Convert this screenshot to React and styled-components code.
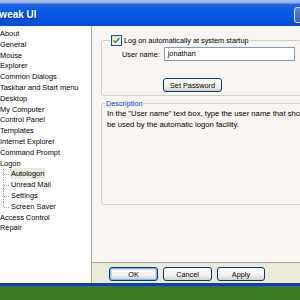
import styled, { createGlobalStyle } from "styled-components";

const Global = createGlobalStyle`
  html, body { margin: 0; padding: 0; }
  body { width: 300px; height: 300px; overflow: hidden; font-family: "Liberation Sans", Arial, sans-serif; }
`;

const Screen = styled.div`
  width: 300px;
  height: 300px;
  overflow: hidden;
  display: flex;
  flex-direction: column;
  background: linear-gradient(to bottom, #2f6f1e, #4d8f2a 6px, #3a7a22);
`;

const Window = styled.div`
  display: flex;
  flex-direction: column;
  width: 300px;
  border-bottom: 3px solid #0a3fb8;
`;

const TitleBar = styled.div`
  height: 26px;
  display: flex;
  align-items: center;
  justify-content: space-between;
  background: linear-gradient(to bottom, #a9c0ec 0, #8eaeea 3px, #2a66e4 4px, #0a5be8 9px, #0053e0 20px, #0a4acc 26px);
  color: #fff;
  font-weight: bold;
  font-size: 10px;
  padding-top: 3px;
  box-sizing: border-box;
`;

const Title = styled.span`
  margin-left: -6px;
  text-shadow: 1px 1px 0 #0a2f9a;
`;

const TitleButton = styled.div`
  width: 14px;
  height: 14px;
  margin-right: -10px;
  border: 1px solid #dfe8fb;
  border-radius: 3px;
  background: linear-gradient(#4f86f0, #2a62de);
`;

const Body = styled.div`
  height: 257px;
  display: flex;
  background: #ece9d8;
`;

const Tree = styled.ul`
  flex: 0 0 91px;
  margin: 0;
  padding: 3px 0 0 0;
  list-style: none;
  background: #fff;
  border-right: 1px solid #a7a6aa;
  font-size: 7.4px;
  color: #000;
  overflow: hidden;
`;

const Node = styled.li`
  position: relative;
  height: 10.8px;
  line-height: 10.8px;
  padding-left: ${(p) => (p.$child ? "11px" : "0")};
  margin-left: -1px;
  white-space: nowrap;
`;

const NodeLabel = styled.span`
  padding: 1px 1px;
  background: ${(p) => (p.$selected ? "#ece9d8" : "transparent")};
`;

const Branch = styled.span`
  position: absolute;
  left: 4px;
  top: 0;
  width: 6px;
  height: ${(p) => (p.$last ? "5px" : "10.8px")};
  border-left: 1px dotted #a0a0a0;
  &::after {
    content: "";
    position: absolute;
    left: 0;
    top: 5px;
    width: 5px;
    border-top: 1px dotted #a0a0a0;
  }
`;

const Main = styled.div`
  flex: 1;
  min-width: 0;
  display: flex;
  flex-direction: column;
  overflow: hidden;
`;

const Page = styled.div`
  height: 237px;
  box-sizing: border-box;
  background: #f8f5f2;
  border-bottom: 1px solid #a7a6aa;
  padding: 9px 0 0 9px;
  font-size: 7.3px;
  overflow: hidden;
`;

const Group = styled.fieldset`
  min-width: 0;
  margin: 0 -10px 0 0;
  padding: 0;
  border: 1px solid #d0d0bf;
  border-radius: 3px;
  height: ${(p) => p.$h}px;
  box-sizing: border-box;
  & + & {
    margin-top: 3px;
  }
`;

const Legend = styled.legend`
  display: flex;
  align-items: center;
  gap: 2px;
  padding: 0 1px;
  margin-left: ${(p) => p.$indent}px;
  color: ${(p) => p.$color || "#000"};
  font-size: 7.3px;
`;

const Check = styled.span`
  width: 9px;
  height: 9px;
  border: 1px solid #1c5180;
  background: linear-gradient(135deg, #dcdcd7, #fff);
  display: flex;
  align-items: center;
  justify-content: center;
`;

const Row = styled.div`
  display: flex;
  align-items: center;
  margin: 1px 0 0 20px;
  gap: 4px;
`;

const Label = styled.span`
  flex: 0 0 37px;
  white-space: nowrap;
`;

const Input = styled.div`
  flex: 0 0 131px;
  height: 14px;
  box-sizing: border-box;
  border: 1px solid #7f9db9;
  background: #fff;
  padding-left: 3px;
  line-height: 12px;
`;

const Button = styled.button`
  font-family: inherit;
  font-size: 7.3px;
  color: #000;
  height: 14px;
  width: ${(p) => p.$w}px;
  padding: 0;
  border: 1px solid #003c74;
  border-radius: 3px;
  background: linear-gradient(#fff, #f2f1ea 60%, #d6d0c5);
  box-shadow: ${(p) => (p.$default ? "inset 0 0 0 1px #8cb4f2, inset 0 0 0 2px #c6d8f8" : "none")};
`;

const PassRow = styled.div`
  margin: 17px 0 0 61px;
`;

const Description = styled.p`
  margin: 0 0 0 5px;
  font-size: 7.7px;
  line-height: 11px;
  white-space: nowrap;
`;

const Buttons = styled.div`
  display: flex;
  gap: 5px;
  padding: 4px 0 0 17px;
`;

const items = [
  "About", "General", "Mouse", "Explorer", "Common Dialogs", "Taskbar and Start menu",
  "Desktop", "My Computer", "Control Panel", "Templates", "Internet Explorer",
  "Command Prompt", "Logon",
];
const logonChildren = ["Autologon", "Unread Mail", "Settings", "Screen Saver"];
const tail = ["Access Control", "Repair"];

export default function App() {
  return (
    <>
      <Global />
      <Screen>
        <Window>
          <TitleBar>
            <Title>Tweak UI</Title>
            <TitleButton />
          </TitleBar>
          <Body>
            <Tree>
              {items.map((t) => (
                <Node key={t}><NodeLabel>{t}</NodeLabel></Node>
              ))}
              {logonChildren.map((t, i) => (
                <Node key={t} $child>
                  <Branch $last={i === logonChildren.length - 1} />
                  <NodeLabel $selected={i === 0}>{t}</NodeLabel>
                </Node>
              ))}
              {tail.map((t) => (
                <Node key={t}><NodeLabel>{t}</NodeLabel></Node>
              ))}
            </Tree>
            <Main>
              <Page>
                <Group $h={61}>
                  <Legend $indent={8}>
                    <Check>
                      <svg width="7" height="7" viewBox="0 0 7 7">
                        <path d="M0.5 3.5 L2.5 5.5 L6.5 1" stroke="#21a121" strokeWidth="1.5" fill="none" />
                      </svg>
                    </Check>
                    Log on automatically at system startup
                  </Legend>
                  <Row>
                    <Label>User name:</Label>
                    <Input>jonathan</Input>
                  </Row>
                  <PassRow>
                    <Button $w={59}>Set Password</Button>
                  </PassRow>
                </Group>
                <Group $h={106}>
                  <Legend $indent={3} $color="#0046d5">Description</Legend>
                  <Description>
                    In the "User name" text box, type the user name that should
                    <br />
                    be used by the automatic logon facility.
                  </Description>
                </Group>
              </Page>
              <Buttons>
                <Button $w={49} $default>OK</Button>
                <Button $w={49}>Cancel</Button>
                <Button $w={48}>Apply</Button>
              </Buttons>
            </Main>
          </Body>
        </Window>
      </Screen>
    </>
  );
}
